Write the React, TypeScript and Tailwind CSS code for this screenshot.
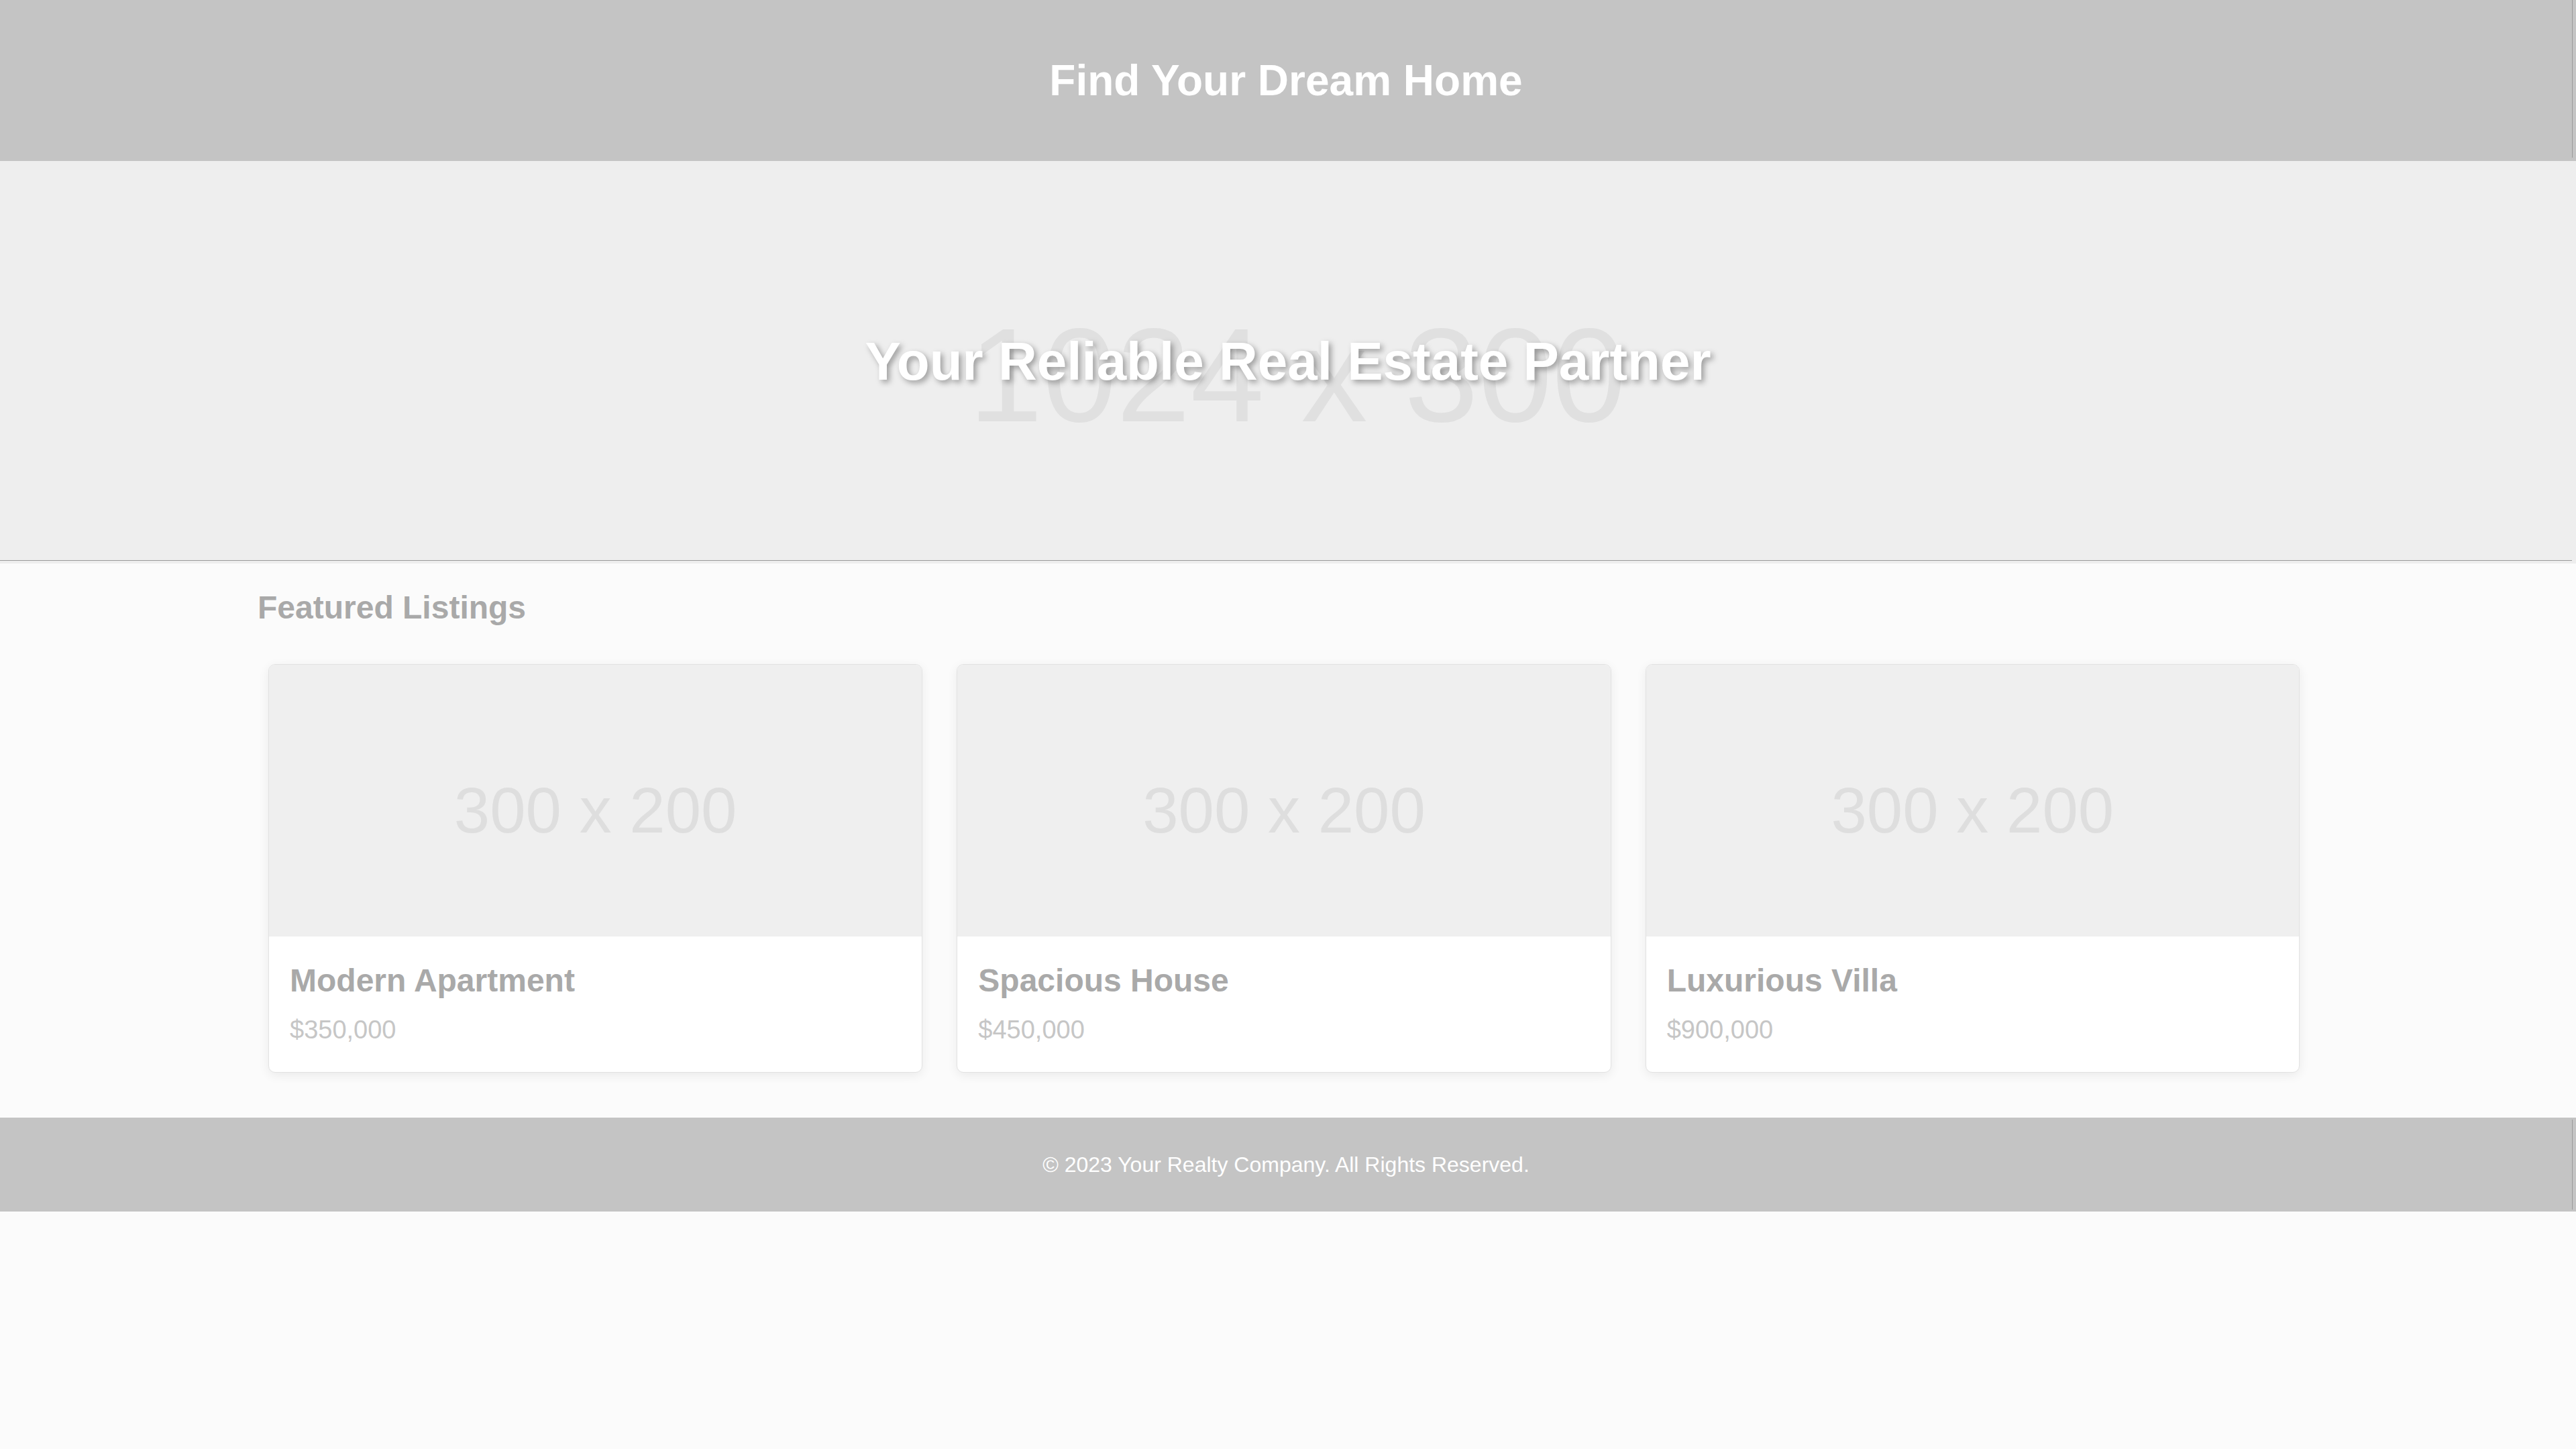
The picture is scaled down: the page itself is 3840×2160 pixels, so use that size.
const listings = [
  { title: 'Modern Apartment', price: '$350,000' },
  { title: 'Spacious House', price: '$450,000' },
  { title: 'Luxurious Villa', price: '$900,000' },
]

function ListingCard({ title, price }: { title: string; price: string }) {
  return (
    <div className="bg-white border border-[#e2e2e2] rounded-[10px] overflow-hidden shadow-[0_4px_16px_rgba(0,0,0,0.07)]">
      <div className="h-[405px] bg-[#efefef] flex items-center justify-center pt-[28px]">
        <span className="text-[96px] leading-none text-[#dedede]">300 x 200</span>
      </div>
      <div className="px-[31px] pt-[42px] pb-[44px]">
        <h3 className="text-[48px] leading-none font-bold text-[#a9a9a9]">{title}</h3>
        <p className="mt-[30px] text-[38px] leading-none text-[#c6c6c6]">{price}</p>
      </div>
    </div>
  )
}

export default function App() {
  return (
    <div className="min-h-screen bg-[#fbfbfb] font-['Liberation_Sans',Arial,sans-serif]">
      {/* Header */}
      <header className="h-[240px] bg-[#c4c4c4] flex">
        <div className="flex-1 flex items-center justify-center">
          <h1 className="text-[64px] leading-none font-bold text-white">Find Your Dream Home</h1>
        </div>
        <div className="w-px bg-[#9a9a9a] mb-[5px] mr-[5px]" />
      </header>

      {/* Hero */}
      <section className="h-[600px] bg-[#eeeeee] flex flex-col">
        <div className="relative flex-1 flex items-center justify-center pt-[3px] overflow-hidden">
          <div className="absolute inset-0 flex items-center justify-center pt-[44px] pl-[28px]">
            <span className="text-[198px] leading-none text-[#e0e0e0]">1024 x 300</span>
          </div>
          <h2 className="relative text-[80px] leading-none font-bold text-white [text-shadow:4px_4px_8px_rgba(0,0,0,0.35)]">
            Your Reliable Real Estate Partner
          </h2>
        </div>
        <div className="h-px bg-[#999999] mr-[6px]" />
        <div className="h-[4px]" />
      </section>

      {/* Listings */}
      <section className="w-[80%] mx-auto pt-[42px] pb-[67px]">
        <h2 className="text-[48px] leading-none font-bold text-[#a9a9a9]">Featured Listings</h2>
        <div className="mt-[60px] pl-[16px] pr-[28px] grid grid-cols-3 gap-[51px]">
          {listings.map((l) => (
            <ListingCard key={l.title} title={l.title} price={l.price} />
          ))}
        </div>
      </section>

      {/* Footer */}
      <footer className="h-[140px] bg-[#c4c4c4] flex">
        <div className="flex-1 flex items-center justify-center">
          <p className="text-[32px] leading-none text-white">© 2023 Your Realty Company. All Rights Reserved.</p>
        </div>
        <div className="w-px bg-[#9a9a9a] my-[3px] mr-[5px]" />
      </footer>
    </div>
  )
}
